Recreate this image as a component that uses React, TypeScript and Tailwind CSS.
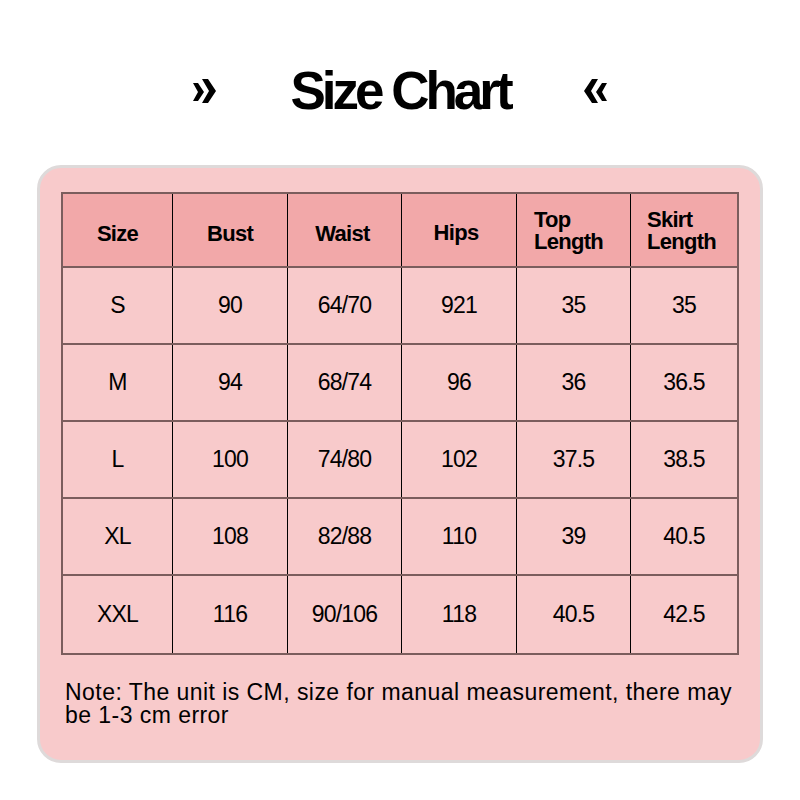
import React from "react";

const headers = ["Size", "Bust", "Waist", "Hips", "Top\nLength", "Skirt\nLength"];

// small nudges so the header labels sit where the picture has them
const headerPad = ["pt-[7px]", "pt-[7px]", "pt-[7px] pr-[4px]", "pt-[5px] pr-[6px]", "pt-[2px] pr-[10px]", "pt-[2px] pr-[5px]"];

const rows = [
    ["S", "90", "64/70", "921", "35", "35"],
    ["M", "94", "68/74", "96", "36", "36.5"],
    ["L", "100", "74/80", "102", "37.5", "38.5"],
    ["XL", "108", "82/88", "110", "39", "40.5"],
    ["XXL", "116", "90/106", "118", "40.5", "42.5"],
];

const gridCols = "grid grid-cols-[110px_115px_114px_115px_114px_106px]";

function Chevrons({ flip }: { flip?: boolean }) {
    return (
        <svg width="24" height="26" viewBox="0 0 24 26" className={flip ? "-scale-x-100" : ""}>
            <polygon points="0,5 5,5 11,14 5,23 0,23 5,14" fill="#000" />
            <polygon points="9,1 15,1 23,13 15,25 9,25 16,13" fill="#000" />
        </svg>
    );
}

export default function App() {
    return (
        <div className="w-[800px] h-[800px] bg-white font-['Liberation_Sans',Arial,sans-serif] text-black">
            <div className="pt-[64px] flex justify-center items-center gap-[73px]">
                <Chevrons />
                <h1 className="text-[53px] leading-none font-bold tracking-[-4px]">Size Chart</h1>
                <Chevrons flip />
            </div>

            <div className="mt-[48px] mx-[37px] h-[598px] rounded-[24px] border-[3px] border-[#dedada] bg-[#f8cacb] pt-[24px] px-[21px]">
                <div className="border-2 border-[#7b5d5d]">
                    <div className={gridCols + " h-[74px] bg-[#f2a8a9] border-b-2 border-[#7b5d5d]"}>
                        {headers.map((h, i) => (
                            <div
                                key={h}
                                className={
                                    "flex items-center justify-center font-bold text-[22px] leading-[22px] tracking-[-0.7px] " +
                                    headerPad[i] +
                                    (i < 5 ? " border-r border-black" : "")
                                }
                            >
                                <span className="whitespace-pre-line text-left">{h}</span>
                            </div>
                        ))}
                    </div>
                    {rows.map((r, ri) => (
                        <div
                            key={r[0]}
                            className={
                                gridCols + " h-[77px] " + (ri < rows.length - 1 ? "border-b-2 border-[#7b5d5d]" : "h-[75px]")
                            }
                        >
                            {r.map((c, i) => (
                                <div
                                    key={i}
                                    className={
                                        "flex items-center justify-center text-[23px] tracking-[-0.8px] " +
                                        (i < 5 ? "border-r border-black" : "")
                                    }
                                >
                                    {c}
                                </div>
                            ))}
                        </div>
                    ))}
                </div>
                <p className="mt-[26px] pl-[4px] text-[23px] leading-[23px] tracking-[0.45px]">
                    Note: The unit is CM, size for manual measurement, there may be 1-3 cm error
                </p>
            </div>
        </div>
    );
}
